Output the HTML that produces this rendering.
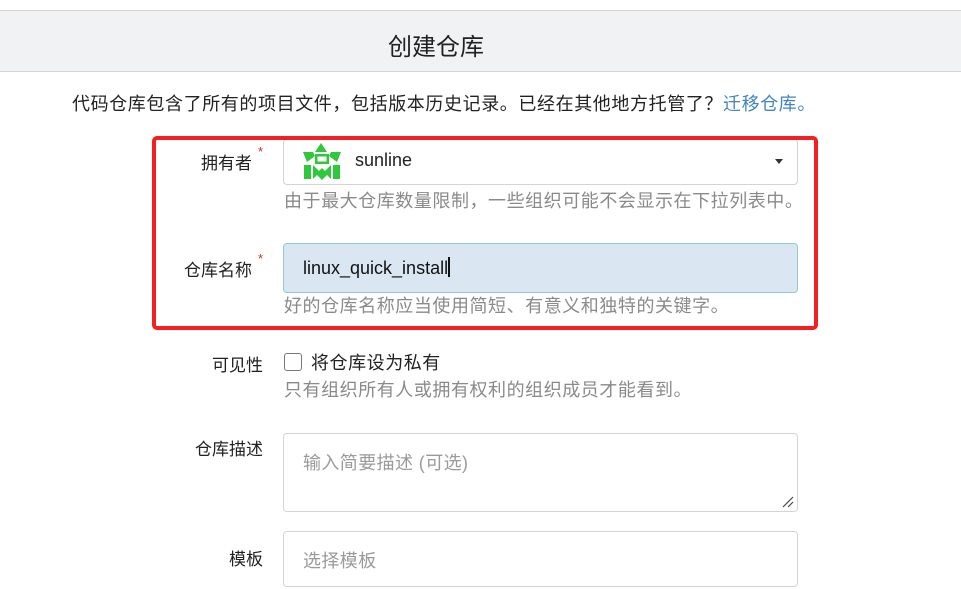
<!DOCTYPE html>
<html><head><meta charset="utf-8"><style>
*{margin:0;padding:0;box-sizing:border-box}
body{width:961px;height:589px;background:#fff;font-family:"Liberation Sans","Noto Sans CJK SC",sans-serif;position:relative;overflow:hidden;color:#212121}
.a{position:absolute;white-space:nowrap}
.hdr{position:absolute;left:0;top:10px;width:961px;height:62px;background:#f1f2f4;border-top:1px solid #d4d4d5;border-bottom:1px solid #d4d4d5}
.lbl{font-size:17px;text-align:right;width:140px;left:123px}
.star{color:#db2828;font-size:13px;position:absolute;right:0;top:-5px}
.lbls{padding-right:11px}
.box{position:absolute;left:283px;width:515px;border:1px solid #d2d4d8;border-radius:4px;background:#fff}
.help{font-size:18px;color:#8a8a8a;left:284px;letter-spacing:0.55px}
.ph{color:#9a9a9a;font-size:18px;letter-spacing:0.4px}
</style></head><body>
<div class="hdr"></div>
<div class="a" style="left:336px;width:200px;text-align:center;top:27px;font-size:24px;color:#222">创建仓库</div>
<div class="a" style="left:72px;top:90px;font-size:18px;color:#222;letter-spacing:0.6px">代码仓库包含了所有的项目文件，包括版本历史记录。已经在其他地方托管了？<span style="color:#4183c4">迁移仓库。</span></div>

<div class="a lbl lbls" style="top:149px">拥有者<span class="star">*</span></div>
<div class="box" style="top:139px;height:46px"></div>
<svg class="a" style="left:302px;top:142px" width="40" height="40" viewBox="0 0 40 40">
<g fill="#2fc83a"><polygon points="19,1 25,10 13,10"/><polygon points="1,10 11,10 13,14 5,20"/><polygon points="39,10 29,10 27,14 35,20"/><path d="M13,12h14v10h-14z M15.5,14.5v5h9v-5z" fill-rule="evenodd"/><rect x="2" y="23" width="7" height="14"/><rect x="31" y="23" width="7" height="14"/><polygon points="11,23 18,30 11,37"/><polygon points="29,23 22,30 29,37"/><polygon points="20,26 26,32 20,38 14,32"/></g></svg>
<div class="a" style="left:355px;top:150px;font-size:18px;color:#222">sunline</div>
<div class="a" style="left:775px;top:159px;width:0;height:0;border-left:4px solid transparent;border-right:4px solid transparent;border-top:5px solid #333"></div>
<div class="a help" style="top:187px">由于最大仓库数量限制，一些组织可能不会显示在下拉列表中。</div>

<div class="a lbl lbls" style="top:256px">仓库名称<span class="star">*</span></div>
<div class="box" style="top:243px;height:50px;background:#dae6f2;border-color:#96c8da"></div>
<div class="a" style="left:303px;top:257px;font-size:18px;color:#111">linux_quick_install<span style="display:inline-block;width:2px;height:20px;background:#111;vertical-align:-3px"></span></div>
<div class="a help" style="top:292px">好的仓库名称应当使用简短、有意义和独特的关键字。</div>

<div class="a" style="left:152px;top:136px;width:666px;height:194px;border:4px solid #f41f1f;border-radius:5px"></div>

<div class="a lbl" style="top:351px">可见性</div>
<div class="a" style="left:284px;top:353px;width:18px;height:18px;border:1px solid #777;border-radius:3px"></div>
<div class="a" style="left:311px;top:349px;font-size:18px;color:#222;letter-spacing:0.55px">将仓库设为私有</div>
<div class="a help" style="top:376px">只有组织所有人或拥有权利的组织成员才能看到。</div>

<div class="a lbl" style="top:435px">仓库描述</div>
<div class="box" style="top:433px;height:79px"></div>
<div class="a ph" style="left:303px;top:449px">输入简要描述 (可选)</div>
<svg class="a" style="left:782px;top:496px" width="12" height="12"><path d="M1 11L11 1M6 11L11 6" stroke="#444" stroke-width="1.2"/></svg>

<div class="a lbl" style="top:545px">模板</div>
<div class="box" style="top:531px;height:56px"></div>
<div class="a ph" style="left:303px;top:547px">选择模板</div>
</body></html>
